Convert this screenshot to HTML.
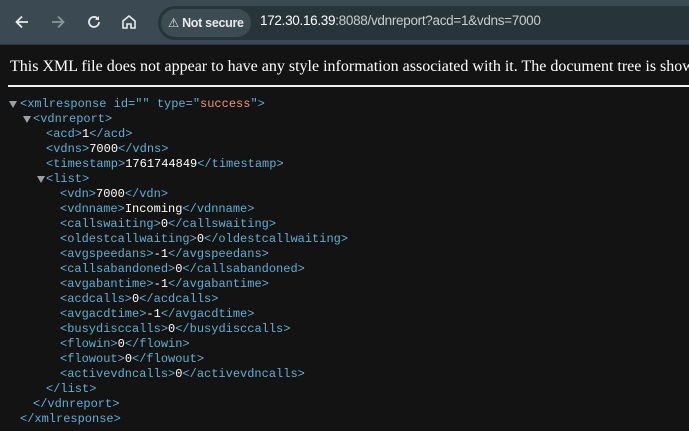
<!DOCTYPE html>
<html><head><style>
html,body{margin:0;padding:0;width:689px;height:431px;overflow:hidden;background:#131313;}
.tb{position:absolute;left:0;top:0;width:689px;height:44px;background:#3b4a52;border-bottom:1px solid #2c363b;overflow:hidden;}
.ic{position:absolute;top:12px;width:20px;height:20px;}
.pill{position:absolute;left:158px;top:6px;width:531px;height:34px;border-radius:17px 0 0 17px;background:#27343a;}
.chip{position:absolute;left:161px;top:9px;width:90px;height:28px;border-radius:14px;background:#3d4b53;color:#e8eaed;font:bold 12.5px "Liberation Sans",sans-serif;line-height:28px;letter-spacing:-0.3px;}
.url{position:absolute;left:260px;top:13px;font:13.5px "Liberation Sans",sans-serif;color:#c5cdd1;letter-spacing:-0.3px;}
.url b{font-weight:normal;color:#fff;}
.msgw{position:absolute;left:0;top:58px;width:689px;height:24px;overflow:hidden;}
.msg{position:absolute;left:10px;top:0;font:16px "Liberation Serif",serif;color:#fff;white-space:nowrap;}
.hr{position:absolute;left:8px;top:85px;width:681px;height:2px;background:#eee;}
.l{position:absolute;font:12px/15px "Liberation Mono",monospace;color:#5db0d7;white-space:pre;}
.l b{color:#fff;font-weight:normal;}
.l i{font-style:normal;color:#f29766;}
.ar{position:absolute;width:0;height:0;border-left:4px solid transparent;border-right:4px solid transparent;border-top:7px solid #9aa0a6;}
</style></head><body>
<div class="tb">
<svg class="ic" style="left:12px" viewBox="0 0 20 20"><path d="M16 10H5M10 4.5 4.5 10 10 15.5" stroke="#e8eaed" stroke-width="1.8" fill="none"/></svg>
<svg class="ic" style="left:48px" viewBox="0 0 20 20"><path d="M4 10h11M10 4.5 15.5 10 10 15.5" stroke="#8a959a" stroke-width="1.8" fill="none"/></svg>
<svg class="ic" style="left:84px" viewBox="0 0 20 20"><path d="M15 10a5 5 0 1 1-1.5-3.6" stroke="#e8eaed" stroke-width="1.8" fill="none"/><path d="M15 4v4h-4z" fill="#e8eaed"/></svg>
<svg class="ic" style="left:119px" viewBox="0 0 20 20"><path d="M4 9 10 4l6 5v7h-4v-4H8v4H4z" stroke="#e8eaed" stroke-width="1.6" fill="none"/></svg>
<div class="pill"></div>
<div class="chip"><span style="margin-left:7px;font-weight:normal">⚠</span> Not secure</div>
<div class="url"><b>172.30.16.39</b>:8088/vdnreport?acd=1&amp;vdns=7000</div>
</div>
<div class="msgw"><div class="msg">This XML file does not appear to have any style information associated with it. The document tree is shown below.</div></div>
<div class="hr"></div>
<div class="ar" style="left:9px;top:101px"></div>
<div class="ar" style="left:23px;top:116px"></div>
<div class="ar" style="left:37px;top:176px"></div>
<div class="l" style="left:20px;top:97px">&lt;xmlresponse id="" type="<i>success</i>"&gt;</div>
<div class="l" style="left:33px;top:112px">&lt;vdnreport&gt;</div>
<div class="l" style="left:46px;top:127px">&lt;acd&gt;<b>1</b>&lt;/acd&gt;</div>
<div class="l" style="left:46px;top:142px">&lt;vdns&gt;<b>7000</b>&lt;/vdns&gt;</div>
<div class="l" style="left:46px;top:157px">&lt;timestamp&gt;<b>1761744849</b>&lt;/timestamp&gt;</div>
<div class="l" style="left:46px;top:172px">&lt;list&gt;</div>
<div class="l" style="left:60px;top:187px">&lt;vdn&gt;<b>7000</b>&lt;/vdn&gt;
&lt;vdnname&gt;<b>Incoming</b>&lt;/vdnname&gt;
&lt;callswaiting&gt;<b>0</b>&lt;/callswaiting&gt;
&lt;oldestcallwaiting&gt;<b>0</b>&lt;/oldestcallwaiting&gt;
&lt;avgspeedans&gt;<b>-1</b>&lt;/avgspeedans&gt;
&lt;callsabandoned&gt;<b>0</b>&lt;/callsabandoned&gt;
&lt;avgabantime&gt;<b>-1</b>&lt;/avgabantime&gt;
&lt;acdcalls&gt;<b>0</b>&lt;/acdcalls&gt;
&lt;avgacdtime&gt;<b>-1</b>&lt;/avgacdtime&gt;
&lt;busydisccalls&gt;<b>0</b>&lt;/busydisccalls&gt;
&lt;flowin&gt;<b>0</b>&lt;/flowin&gt;
&lt;flowout&gt;<b>0</b>&lt;/flowout&gt;
&lt;activevdncalls&gt;<b>0</b>&lt;/activevdncalls&gt;</div>
<div class="l" style="left:46px;top:382px">&lt;/list&gt;</div>
<div class="l" style="left:33px;top:397px">&lt;/vdnreport&gt;</div>
<div class="l" style="left:20px;top:412px">&lt;/xmlresponse&gt;</div>
</body></html>
